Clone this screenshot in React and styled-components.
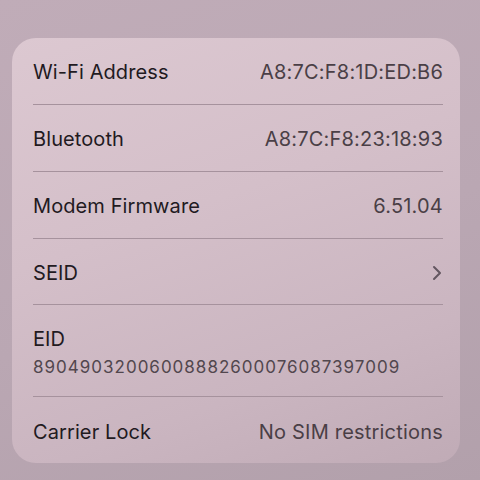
import React from 'react';
import styled, { createGlobalStyle } from 'styled-components';

const GlobalStyle = createGlobalStyle`
  html, body {
    margin: 0;
    padding: 0;
  }
  body {
    background: #bba8b4;
    font-family: Inter, "Noto Sans", sans-serif;
  }
`;

const Screen = styled.div`
  width: 480px;
  height: 480px;
  box-sizing: border-box;
  padding: 38px 20px 17px 12px;
  background: linear-gradient(160deg, #c0acb8 0%, #baa7b3 55%, #b2a0ab 100%);
  overflow: hidden;
`;

const Card = styled.div`
  height: 100%;
  box-sizing: border-box;
  padding: 0 17px 0 21px;
  border-radius: 24px;
  background: linear-gradient(160deg, #dcc8d1 0%, #d4bfc9 40%, #cab5c0 75%, #c0abb6 100%);
  display: flex;
  flex-direction: column;
`;

const Row = styled.div`
  display: flex;
  flex-direction: ${p => (p.$stacked ? 'column' : 'row')};
  align-items: ${p => (p.$stacked ? 'flex-start' : 'center')};
  justify-content: ${p => (p.$stacked ? 'center' : 'space-between')};
  height: ${p => p.$h}px;
  padding-top: 3px;
  box-sizing: border-box;
  border-bottom: ${p => (p.$last ? 'none' : '1px solid #a6929d')};
`;

const Label = styled.span`
  font-size: 20px;
  color: #221a1f;
  letter-spacing: 0.1px;
`;

const Value = styled.span`
  font-size: 20px;
  color: #4a3f46;
  letter-spacing: 0.2px;
`;

const LongValue = styled.span`
  margin-top: 6px;
  font-size: 17px;
  color: #52474e;
  letter-spacing: 1px;
`;

const Chevron = styled.svg`
  width: 10px;
  height: 16px;
  margin-right: 1px;
`;

const rows = [
  { label: 'Wi-Fi Address', value: 'A8:7C:F8:1D:ED:B6' },
  { label: 'Bluetooth', value: 'A8:7C:F8:23:18:93' },
  { label: 'Modem Firmware', value: '6.51.04' },
  { label: 'SEID', chevron: true },
];

export default function App() {
  return (
    <>
      <GlobalStyle />
      <Screen>
        <Card>
          {rows.map(r => (
            <Row key={r.label} $h={67}>
              <Label>{r.label}</Label>
              {r.chevron ? (
                <Chevron viewBox="0 0 10 16">
                  <path d="M2 2 L8 8 L2 14" fill="none" stroke="#635660" strokeWidth="2" strokeLinecap="round" strokeLinejoin="round" />
                </Chevron>
              ) : (
                <Value>{r.value}</Value>
              )}
            </Row>
          ))}
          <Row $stacked $h={92}>
            <Label>EID</Label>
            <LongValue>89049032006008882600076087397009</LongValue>
          </Row>
          <Row $last $h={66}>
            <Label>Carrier Lock</Label>
            <Value>No SIM restrictions</Value>
          </Row>
        </Card>
      </Screen>
    </>
  );
}
